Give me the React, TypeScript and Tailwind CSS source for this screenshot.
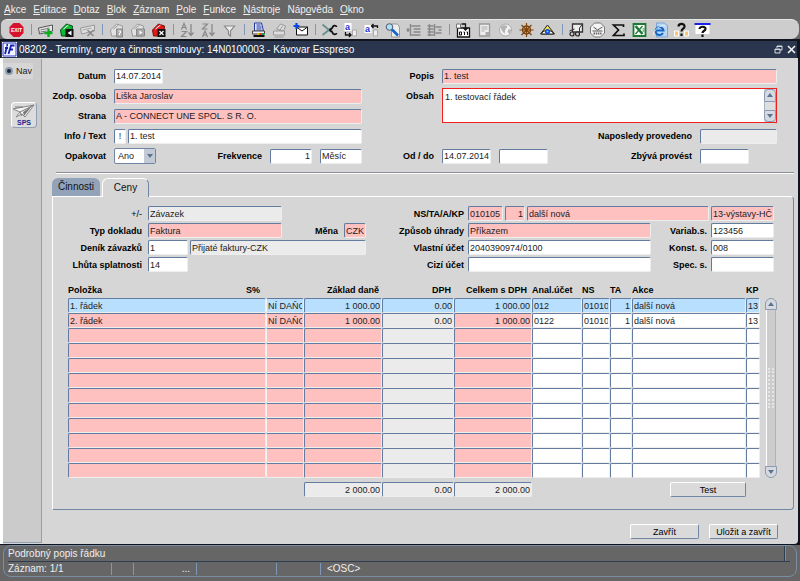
import type { ReactNode } from "react";
import clsx from "clsx";

type Tone = "white" | "pink" | "gray" | "blue";

const tones: Record<Tone, string> = {
  white: "bg-white",
  pink: "bg-[#ffc0c0]",
  gray: "bg-[#ebebeb]",
  blue: "bg-[#b9dfff]",
};

const menu = [
  ["", "A", "kce"],
  ["", "E", "ditace"],
  ["", "D", "otaz"],
  ["", "B", "lok"],
  ["", "Z", "áznam"],
  ["", "P", "ole"],
  ["", "F", "unkce"],
  ["", "N", "ástroje"],
  ["Náp", "o", "věda"],
  ["", "O", "kno"],
];

const card = "M1 6 15 3v6L2 12Z";
const folder = "M2 8 8 2l6 2-1 10H3Z";

const icons: Record<string, ReactNode> = {
  exit: (
    <>
      <path d="M5 1h6l4 4v6l-4 4H5l-4-4V5Z" fill="#d8112c" />
      <text x="8" y="10" fontSize="5" fontWeight="bold" textAnchor="middle" fill="#fff">EXIT</text>
    </>
  ),
  insert: (
    <>
      <path d={card} fill="#e6e6e6" stroke="#555" />
      <path d="M3 8l9-2M3 10l6-1" stroke="#777" />
      <path d="M11 7v8M7 11h8" stroke="#08b020" strokeWidth="2.4" />
    </>
  ),
  query: (
    <>
      <path d={folder} fill="#0bbb30" stroke="#064d14" />
      <path d="M5 7l5-4" stroke="#fff" />
      <path d="M7 7h8v8H7Z" fill="#111" />
      <path d="M13 8.500v5L9 11Z" fill="#fff" />
    </>
  ),
  remove: (
    <>
      <path d={card} fill="#ddd" stroke="#999" />
      <path d="M3 8l9-2" stroke="#aaa" />
      <path d="m8 8 6 6m0-6-6 6" stroke="#888" strokeWidth="1.500" />
    </>
  ),
  enter: (
    <>
      <path d={folder} fill="#e2e2e2" stroke="#999" />
      <path d="m5 7 5-4" stroke="#999" />
      <path d="M8 7h6v8H8Z" fill="#aaa" stroke="#888" />
      <path d="M10 9h2v2h-1v2" fill="none" stroke="#fff" />
    </>
  ),
  execute: (
    <>
      <path d={folder} fill="#e2e2e2" stroke="#999" />
      <path d="m5 7 5-4" stroke="#999" />
      <path d="M7 7h8v7H7Z" fill="#aaa" stroke="#888" />
      <path d="m10 8.500 3 2-3 2Z" fill="#fff" />
    </>
  ),
  cancel: (
    <>
      <path d={folder} fill="#e01a1a" stroke="#7c0d0d" />
      <path d="M5 7l5-4" stroke="#fff" />
      <path d="M7 7h8v8H7Z" fill="#111" />
      <path d="m9 9 4 4m0-4-4 4" stroke="#fff" strokeWidth="1.200" />
    </>
  ),
  asc: (
    <>
      <path d="M2 7.500 4.500 1.500 7 7.500M3 5.500h3M2 9.500h5l-5 5h5" fill="none" stroke="#888" strokeWidth="1.200" />
      <path d="M11.500 2v11M9 10.500l2.500 3 2.500-3" fill="none" stroke="#888" strokeWidth="1.300" />
    </>
  ),
  desc: (
    <>
      <path d="M2 2h5L2 7h5M2 15 4.500 9 7 15M3 13h3" fill="none" stroke="#888" strokeWidth="1.200" />
      <path d="M11.500 2v11M9 10.500l2.500 3 2.500-3" fill="none" stroke="#888" strokeWidth="1.300" />
    </>
  ),
  filter: <path d="M3 4h10l-4 5v5l-2-1.500V9Z" fill="#eee" stroke="#888" strokeWidth="1.200" />,
  print: (
    <>
      <path d="M4 1h7l2 8H4Z" fill="#dfe4ff" stroke="#223a9b" />
      <path d="M6 3h4M6 5h5M6 7h5" stroke="#223a9b" />
      <path d="M2 9h12v3H2Z" fill="#eee" stroke="#444" />
      <path d="M3 14h11" stroke="#111" strokeWidth="2" />
      <path d="M7 12h2" stroke="#e8c400" strokeWidth="2" />
      <path d="M9 12h2" stroke="#e02828" strokeWidth="2" />
      <path d="M11 12h3" stroke="#15a83a" strokeWidth="2" />
    </>
  ),
  printSetup: (
    <>
      <path d="m5 7 4-5 5 2-2 5ZM2 9h11v4H2Z" fill="#ddd" stroke="#999" />
      <path d="m8 9 3-5M3 15h9" stroke="#999" />
    </>
  ),
  mail: (
    <>
      <path d="M4 5h11v8H4Z" fill="#fff" stroke="#111" />
      <path d="m4 5 5.500 4L15 5" fill="none" stroke="#111" />
      <path d="M4 1v6M1 4h6" stroke="#0a46e6" strokeWidth="2.200" />
    </>
  ),
  cut: (
    <>
      <path d="M1 2.500 10 10M1 13l9-7" stroke="#668f8f" strokeWidth="1.800" />
      <path d="m8 8 3-2m-3 2 3 2" stroke="#111" strokeWidth="2" />
      <path d="M11 6c0-3 4-3 4-1m-4 5c0 3 4 3 4 1" fill="none" stroke="#111" strokeWidth="1.600" />
    </>
  ),
  copy: (
    <>
      <path d="M2 1h7v8H2Z" fill="#fff" />
      <text x="2.500" y="8" fontSize="9" fontWeight="bold" fill="#2232dd">a</text>
      <path d="M3 10v3h5M6.500 11l2 2-2 2" fill="none" stroke="#111" strokeWidth="1.300" />
      <path d="M10 8h4v6h-4Z" fill="#eee" stroke="#aaa" />
    </>
  ),
  paste: (
    <>
      <path d="M1 3h7v8H1Z" fill="#fff" />
      <text x="1.500" y="10" fontSize="9" fontWeight="bold" fill="#2232dd">a</text>
      <path d="M14 6V4H8M10 2 8 4l2 2" fill="none" stroke="#111" strokeWidth="1.300" />
      <path d="M10 8h4v6h-4Z" fill="#eee" stroke="#aaa" />
    </>
  ),
  find: (
    <>
      <path d="M7 2h6l2 3v10H7Z" fill="#eee" stroke="#999" />
      <circle cx="5" cy="5" r="3.300" fill="#a9e2f2" stroke="#557" />
      <path d="m7.500 7.500 6 6" stroke="#1466c8" strokeWidth="2.600" />
    </>
  ),
  rows: <path d="M5 2v12M6 4h9M8 7h7M8 10h7M6 13h9M1 8h3M2.500 6v4" fill="none" stroke="#888" strokeWidth="1.400" />,
  tree: <path d="M3 2v12M8 2v12M1 4h6M1 7h6M1 10h6M1 13h6M9 5h6M9 11h6M12 8h3" fill="none" stroke="#888" strokeWidth="1.400" />,
  calendar: (
    <>
      <path d="M2 6h12v9H2Z" fill="#fff" stroke="#111" strokeWidth="1.300" />
      <path d="M1 2h4v4H1Z" fill="#fff" stroke="#777" />
      <path d="M6 2h4v6M8 6l2 2 2-2" fill="none" stroke="#111" strokeWidth="1.300" />
      <path d="M4 10h2v3H4ZM8 10h1v3M11 10h1v3" fill="none" stroke="#111" />
    </>
  ),
  note: (
    <>
      <path d="M3 2h10v12H3Z" fill="#eee" stroke="#999" strokeWidth="1.300" />
      <path d="M5 5h6M5 7h6M5 9h3" stroke="#aaa" />
      <path d="M9 10h4v4H9Z" fill="#aaa" />
    </>
  ),
  globe: (
    <>
      <circle cx="8" cy="8" r="6" fill="#f4f4f4" stroke="#aaa" />
      <path d="M3 4c3 0 5-2 7 1l-2 2-1 5-3-4ZM11 7l3 1-2 4-2-2Z" fill="#b4b4b4" />
    </>
  ),
  wheel: (
    <>
      <circle cx="8" cy="8" r="4" fill="#e0b06a" stroke="#7c4510" strokeWidth="1.500" />
      <path d="M8 1v14M1 8h14M3 3l10 10M13 3 3 13" stroke="#7c4510" strokeWidth="1.200" />
      <circle cx="8" cy="8" r="1.500" fill="#7c4510" />
    </>
  ),
  eye: (
    <>
      <path d="M8 3 1 12h14Z" fill="#f3e34a" stroke="#222" />
      <path d="M2 12c2-5 10-5 12 0Z" fill="#fff" stroke="#222" />
      <circle cx="8" cy="9.500" r="2.600" fill="#1646e0" />
      <circle cx="8" cy="9.500" r="1" fill="#64d8f0" />
    </>
  ),
  cart: (
    <>
      <path d="M4 2h10v8H4Z" fill="#eee" stroke="#333" strokeWidth="1.300" />
      <path d="m14 2-3 4v4M1 9l5-2" stroke="#333" fill="none" />
      <circle cx="3.500" cy="12" r="2" fill="#ccc" stroke="#222" strokeWidth="1.200" />
      <circle cx="9" cy="12" r="2" fill="#ccc" stroke="#222" strokeWidth="1.200" />
    </>
  ),
  clock: (
    <>
      <path d="M5 1h6l4 4v6l-4 4H5l-4-4V5Z" fill="#f4f4f4" stroke="#777" />
      <path d="m4 5 4 3 5-3M3 9h10" stroke="#555" fill="none" />
      <path d="M4 11.500h8" stroke="#666" strokeWidth="2" strokeDasharray="1.500 .7" />
    </>
  ),
  sum: <path d="M13 5V3H3l5 5-5 5.500h10.500v-2" fill="none" stroke="#111" strokeWidth="1.700" />,
  excel: (
    <>
      <path d="M2 2h12v12H2Z" fill="#fff" stroke="#1d7a35" strokeWidth="1.800" />
      <path d="m4 4 7 8" stroke="#1d7a35" strokeWidth="2.600" />
      <path d="m11 4-7 8" stroke="#1d7a35" strokeWidth="1.400" />
      <path d="M11 7h2M11 9h2" stroke="#1d7a35" />
    </>
  ),
  web: (
    <>
      <path d="M4 1h8l3 3v11H4Z" fill="#b9d6f4" stroke="#7ba4d3" />
      <path d="M10.500 11A4 4 0 1 1 11 8.500H4" fill="none" stroke="#1667c4" strokeWidth="2" />
      <path d="M1 13C0 9 8 2 13 4" fill="none" stroke="#e6f3ff" />
    </>
  ),
  whatsThis: (
    <>
      <path d="M1 9h4v5H1ZM11 9h4v5h-4Z" fill="#ffc469" stroke="#fff" />
      <path d="M5 4.500C5 1 11.500 1 11 4.500 11 7 8 6.500 8 9.500M8 11.500V14" fill="none" stroke="#111" strokeWidth="2.200" />
    </>
  ),
  help: (
    <>
      <path d="M1 3h14v9H1Z" fill="#fff" />
      <path d="M0 2h16" stroke="#1a22e8" strokeWidth="2" />
      <path d="M5 7C5 4 11.500 4 11 7c0 2-3 1.500-3 4M8 12.500V15" fill="none" stroke="#111" strokeWidth="2.200" />
    </>
  ),
};

const groups: [string, string][][] = [
  [["exit", "Konec"]],
  [["insert", "Vložit"], ["query", "Dotaz"], ["remove", "Odstranit"]],
  [["enter", "Zadat dotaz"], ["execute", "Provést dotaz"], ["cancel", "Zrušit dotaz"]],
  [["asc", "Vzestupně"], ["desc", "Sestupně"], ["filter", "Filtr"]],
  [["print", "Tisk"], ["printSetup", "Nastavení tisku"], ["mail", "Pošta"]],
  [["cut", "Vyjmout"], ["copy", "Kopírovat"], ["paste", "Vložit text"], ["find", "Najít"], ["rows", "Řádky"], ["tree", "Strom"]],
  [["calendar", "Kalendář"], ["note", "Poznámka"], ["globe", "Svět"], ["wheel", "Navigace"], ["eye", "Náhled"]],
  [["cart", "Doklady"], ["clock", "Čas"], ["sum", "Součet"], ["excel", "Excel"], ["web", "Web"], ["whatsThis", "Co je to"], ["help", "Pomoc"]],
];

const fieldBase =
  "block h-[15px] min-w-0 rounded-[2px] border border-t-[#647ba0] border-l-[#647ba0] border-r-[#eeeeee] border-b-[#eeeeee] px-px text-[9px] leading-3 text-[#222] outline-none";

type FieldProps = {
  id: string;
  value?: string;
  tone?: Tone;
  className?: string;
  label?: string;
};

function Field({ id, value = "", tone = "white", className, label }: FieldProps) {
  return (
    <input id={id} defaultValue={value} aria-label={label} className={clsx(fieldBase, tones[tone], className)} />
  );
}

type LabelProps = { htmlFor: string; className?: string; children: ReactNode };

function Label({ htmlFor, className = "font-bold", children }: LabelProps) {
  return (
    <label htmlFor={htmlFor} className={clsx("shrink-0 text-right text-[9px] leading-3 whitespace-nowrap text-black", className)}>
      {children}
    </label>
  );
}

function Button({ className, children }: { className?: string; children: ReactNode }) {
  return (
    <button
      type="button"
      className={clsx(
        "h-[15px] rounded-[2px] border border-t-white border-l-white border-r-[#7186a6] border-b-[#7186a6] bg-[#dadada] text-[9px] leading-3 text-black",
        className,
      )}
    >
      {children}
    </button>
  );
}

function Arrow({ up = false }: { up?: boolean }) {
  return (
    <svg viewBox="0 0 6 4" className="h-1 w-[6px]">
      <path d={up ? "M0 4 3 0l3 4Z" : "M0 0h6L3 4Z"} fill="#5c7292" />
    </svg>
  );
}

function Toolbar() {
  return (
    <div className="mr-px ml-px flex h-5 items-center gap-1 overflow-hidden rounded-l-md rounded-r-lg border-t border-[#e6e6e6] bg-[#cdcdcd] pl-[7px]">
      {groups.map((group, index) => (
        <div key={index} className="flex items-center gap-1">
          {index > 0 && (
            <span className="flex w-1 justify-center">
              <span className="h-[11px] w-px bg-[#7f97b8]" />
            </span>
          )}
          {group.map(([name, title]) => (
            <button key={name} type="button" aria-label={title} className="h-4 w-[17px]">
              <svg viewBox="0 0 16 16" fill="none" className="h-4 w-[17px]">
                {icons[name]}
              </svg>
            </button>
          ))}
        </div>
      ))}
    </div>
  );
}

function TitleBar() {
  return (
    <header className="mr-[3px] ml-px flex h-[17px] items-center bg-[#29364d] pr-px pl-px text-white">
      <svg viewBox="0 0 15 15" className="h-[15px] w-[15px]">
        <path d="M0 0h15v15H0Z" fill="#fff" />
        <path d="M1 1h13v13H1Z" fill="#f4f6ff" stroke="#2a36c8" />
        <path d="M5 4.500 3 12M4.500 3h1.500M3 6h3M12.500 3.500H9L6.500 12M7.500 7.500H11" stroke="#1420b4" strokeWidth="1.800" fill="none" />
      </svg>
      <h1 className="ml-[2px] grow truncate text-[10px] leading-4">
        08202 - Termíny, ceny a činnosti smlouvy: 14N0100003 - Kávovar Esspreso
      </h1>
      <button type="button" aria-label="Obnovit" className="mr-1">
        <svg viewBox="0 0 9 9" className="h-[9px] w-[9px]">
          <path d="M3 3V1h5v4H6M1 4h5v4H1ZM3 1.500h5M1 4.500h5" fill="none" stroke="#d5d9e0" />
        </svg>
      </button>
      <button type="button" aria-label="Zavřít okno">
        <svg viewBox="0 0 9 9" className="h-[9px] w-[9px]">
          <path d="m1 1 7 7M8 1 1 8" stroke="#f2f2f2" strokeWidth="1.600" />
        </svg>
      </button>
    </header>
  );
}

function Sidebar() {
  return (
    <aside className="mt-px mb-px w-[39px] shrink-0 border-r border-b border-r-[#8f9fb5] border-b-[#8f9fb5] bg-[#cccbcb]">
      <label className="mt-1 mr-2 flex h-4 items-center gap-[3px] bg-[#d6d6d6] pl-[2px] text-[9px] leading-3 text-[#222]">
        <input
          type="radio"
          name="nav"
          defaultChecked
          className="h-2 w-2 appearance-none rounded-full border-2 border-[#8d9bb0] bg-[#1c2836]"
        />
        Nav
      </label>
      <button
        type="button"
        aria-label="SPS"
        className="mt-[23px] ml-2 flex h-[26px] w-[26px] items-center justify-center rounded-sm border border-t-white border-l-white border-r-[#8f9fb5] border-b-[#8f9fb5] bg-[#dcdcdc]"
      >
        <svg viewBox="0 0 24 24" className="h-6 w-6">
          <path d="M1 6 22 2l-9 12-3-3-6 3 4-5Z" fill="#f7f7f7" stroke="#888" />
          <path d="m20 3-8 10-1-4Z" fill="#777" />
          <path d="M22 2 8 9l2 4M3 4h8" fill="none" stroke="#777" />
          <text x="12" y="22" fontSize="7" fontWeight="bold" textAnchor="middle" fill="#23238e">SPS</text>
        </svg>
      </button>
    </aside>
  );
}

function ContractForm() {
  return (
    <div className="flex pr-[17px]">
      <div className="w-[320px] shrink-0">
        <div className="flex h-5 items-center gap-2">
          <Label htmlFor="datum" className="w-16 font-bold">Datum</Label>
          <Field id="datum" value="14.07.2014" className="w-[49px]" />
        </div>
        <div className="flex h-5 items-center gap-2">
          <Label htmlFor="osoba" className="w-16 font-bold">Zodp. osoba</Label>
          <Field id="osoba" value="Liška Jaroslav" tone="pink" className="grow" />
        </div>
        <div className="flex h-5 items-center gap-2">
          <Label htmlFor="strana" className="w-16 font-bold">Strana</Label>
          <Field id="strana" value="A - CONNECT UNE SPOL. S R. O." tone="pink" className="grow" />
        </div>
        <div className="flex h-5 items-center gap-2">
          <Label htmlFor="info" className="w-16 font-bold">Info / Text</Label>
          <div className="flex grow gap-[2px]">
            <Field id="info" value="!" className="w-3 text-center text-[#4a6fa5]" />
            <Field id="info-text" label="Text" value="1. test" className="grow" />
          </div>
        </div>
        <div className="flex h-5 items-center gap-2">
          <Label htmlFor="opakovat" className="w-16 font-bold">Opakovat</Label>
          <div className="relative w-[42px]">
            <select
              id="opakovat"
              className="block h-4 w-full appearance-none rounded-[2px] border border-[#7186a6] bg-white pl-[3px] text-[9px] leading-3 text-[#222]"
            >
              <option>Ano</option>
              <option>Ne</option>
            </select>
            <span className="pointer-events-none absolute inset-y-px right-px flex w-[11px] items-center justify-center bg-[#c3cad4]">
              <Arrow />
            </span>
          </div>
          <Label htmlFor="frekvence" className="grow font-bold">Frekvence</Label>
          <Field id="frekvence" value="1" className="w-[42px] text-right" />
          <Field id="jednotka" label="Jednotka" value="Měsíc" className="w-[42px]" />
        </div>
      </div>
      <div className="min-w-0 grow">
        <div className="flex h-5 items-center gap-2">
          <Label htmlFor="popis" className="w-[72px] font-bold">Popis</Label>
          <Field id="popis" value="1. test" tone="pink" className="grow" />
        </div>
        <div className="flex h-10 gap-2 pt-[2px]">
          <Label htmlFor="obsah" className="w-[72px] pt-[2px] font-bold">Obsah</Label>
          <div className="flex h-[35px] grow border border-[#f02020] bg-white">
            <textarea
              id="obsah"
              defaultValue="1. testovací řádek"
              className="block grow resize-none overflow-hidden px-[2px] py-[2px] text-[9px] leading-3 text-[#222] outline-none"
            />
            <div className="flex w-3 flex-col bg-[#cfd6df]">
              <button type="button" aria-label="Nahoru" className="flex flex-1 items-center justify-center rounded-t-sm border border-[#8a9bb3] bg-[#d6dae0]">
                <Arrow up />
              </button>
              <span className="h-2 border-x border-[#a8b4c4] bg-[#dedede]" />
              <button type="button" aria-label="Dolů" className="flex flex-1 items-center justify-center rounded-b-sm border border-[#8a9bb3] bg-[#d6dae0]">
                <Arrow />
              </button>
            </div>
          </div>
        </div>
        <div className="flex h-5 items-center gap-2">
          <Label htmlFor="naposledy" className="grow font-bold">Naposledy provedeno</Label>
          <Field id="naposledy" tone="gray" className="w-[77px]" />
        </div>
        <div className="flex h-5 items-center gap-2">
          <Label htmlFor="od" className="w-[72px] font-bold">Od / do</Label>
          <Field id="od" value="14.07.2014" className="w-[49px]" />
          <Field id="do" label="Do" className="w-[49px]" />
          <Label htmlFor="zbyva" className="grow font-bold">Zbývá provést</Label>
          <div className="w-[77px]">
            <Field id="zbyva" className="w-[49px]" />
          </div>
        </div>
      </div>
    </div>
  );
}

function PriceForm() {
  return (
    <div className="flex pr-1">
      <div className="w-[298px] shrink-0">
        <div className="flex h-[17px] items-center gap-[6px]">
          <Label htmlFor="znak" className="w-[74px]">+/-</Label>
          <Field id="znak" value="Závazek" tone="gray" className="w-[134px]" />
        </div>
        <div className="flex h-[17px] items-center gap-[6px]">
          <Label htmlFor="typ" className="w-[74px] font-bold">Typ dokladu</Label>
          <Field id="typ" value="Faktura" tone="pink" className="w-[134px]" />
          <Label htmlFor="mena" className="grow font-bold">Měna</Label>
          <Field id="mena" value="CZK" tone="pink" className="w-[22px]" />
        </div>
        <div className="flex h-[17px] items-center gap-[6px]">
          <Label htmlFor="denik" className="w-[74px] font-bold">Deník závazků</Label>
          <div className="flex grow gap-[2px]">
            <Field id="denik" value="1" className="w-10" />
            <Field id="denik-nazev" label="Název deníku" value="Přijaté faktury-CZK" tone="gray" className="grow" />
          </div>
        </div>
        <div className="flex h-[17px] items-center gap-[6px]">
          <Label htmlFor="lhuta" className="w-[74px] font-bold">Lhůta splatnosti</Label>
          <Field id="lhuta" value="14" className="w-10" />
        </div>
      </div>
      <div className="min-w-0 grow">
        <div className="flex h-[17px] items-center gap-1">
          <Label htmlFor="ns" className="w-[98px] font-bold">NS/TA/A/KP</Label>
          <div className="flex grow gap-[2px]">
            <Field id="ns" value="010105" tone="pink" className="w-[35px]" />
            <Field id="ta" label="TA" value="1" tone="pink" className="w-5 text-right" />
            <Field id="akce" label="Akce" value="další nová" tone="pink" className="grow" />
            <Field id="kp" label="KP" value="13-výstavy-HČ" tone="pink" className="w-[63px]" />
          </div>
        </div>
        <div className="flex h-[17px] items-center gap-1">
          <Label htmlFor="uhrada" className="w-[98px] font-bold">Způsob úhrady</Label>
          <Field id="uhrada" value="Příkazem" tone="pink" className="grow" />
          <Label htmlFor="variab" className="w-[52px] font-bold">Variab.s.</Label>
          <Field id="variab" value="123456" className="w-[63px]" />
        </div>
        <div className="flex h-[17px] items-center gap-1">
          <Label htmlFor="vlastni" className="w-[98px] font-bold">Vlastní účet</Label>
          <Field id="vlastni" value="2040390974/0100" className="grow" />
          <Label htmlFor="konst" className="w-[52px] font-bold">Konst. s.</Label>
          <Field id="konst" value="008" className="w-[63px]" />
        </div>
        <div className="flex h-[17px] items-center gap-1">
          <Label htmlFor="cizi" className="w-[98px] font-bold">Cizí účet</Label>
          <Field id="cizi" className="grow" />
          <Label htmlFor="spec" className="w-[52px] font-bold">Spec. s.</Label>
          <Field id="spec" className="w-[63px]" />
        </div>
      </div>
    </div>
  );
}

const columns: { title: string; width: string; head: string; cell: string; tone: Tone }[] = [
  { title: "Položka", width: "", head: "text-left", cell: "", tone: "pink" },
  { title: "S%", width: "w-[38px]", head: "", cell: "border-l-[#f6f6f6] px-0", tone: "pink" },
  { title: "Základ daně", width: "w-[78px]", head: "pr-[3px] text-right", cell: "text-right", tone: "pink" },
  { title: "DPH", width: "w-[72px]", head: "pr-[3px] text-right", cell: "text-right", tone: "gray" },
  { title: "Celkem s DPH", width: "w-[78px]", head: "pr-[5px] text-right", cell: "text-right", tone: "pink" },
  { title: "Anal.účet", width: "w-[50px]", head: "text-left", cell: "", tone: "white" },
  { title: "NS", width: "w-[28px]", head: "text-left", cell: "", tone: "white" },
  { title: "TA", width: "w-[22px]", head: "text-left", cell: "text-right", tone: "white" },
  { title: "Akce", width: "w-[114px]", head: "text-left", cell: "", tone: "white" },
  { title: "KP", width: "w-[14px]", head: "text-left", cell: "", tone: "white" },
];

const items = [
  ["1. řádek", "NÍ DAŇOV", "1 000.00", "0.00", "1 000.00", "012", "010105", "1", "další nová", "13-"],
  ["2. řádek", "NÍ DAŇOV", "1 000.00", "0.00", "1 000.00", "0122", "010105", "1", "další nová", "13-"],
  ...Array.from({ length: 10 }, () => [] as string[]),
];

const totals = ["2 000.00", "0.00", "2 000.00"];

function ItemsTable() {
  return (
    <div className="mt-2 flex gap-1">
      <table className="min-w-0 grow table-fixed border-collapse">
        <colgroup>
          {columns.map((column) => (
            <col key={column.title} className={column.width} />
          ))}
        </colgroup>
        <thead>
          <tr className="h-[17px] text-[9px] leading-3 text-black">
            {columns.map((column) => (
              <th key={column.title} className={clsx("py-0 pl-0 font-bold whitespace-nowrap", column.head)}>
                {column.title === "S%" ? <span className="-ml-16">S%</span> : column.title}
              </th>
            ))}
          </tr>
        </thead>
        <tbody>
          {items.map((row, rowIndex) => (
            <tr key={rowIndex}>
              {columns.map((column, index) => (
                <td key={column.title} className="p-0">
                  <Field
                    id={`r${rowIndex}c${index}`}
                    label={`${column.title} ${rowIndex + 1}`}
                    value={row[index]}
                    tone={rowIndex === 0 ? "blue" : column.tone}
                    className={clsx("w-full", column.cell)}
                  />
                </td>
              ))}
            </tr>
          ))}
        </tbody>
        <tfoot>
          <tr>
            <td colSpan={2} />
            {totals.map((total, index) => (
              <td key={index} className="p-0 pt-1">
                <Field id={`total${index}`} label="Součet" value={total} tone="gray" className="w-full text-right" />
              </td>
            ))}
            <td colSpan={4} className="p-0 pt-1 text-right">
              <Button className="ml-auto block w-[76px]">Test</Button>
            </td>
            <td />
          </tr>
        </tfoot>
      </table>
      <div className="mt-[17px] mb-[19px] flex w-[14px] shrink-0 flex-col items-center">
        <button type="button" aria-label="Posunout nahoru" className="flex h-3 w-3 items-center justify-center rounded-t-full border border-[#8a9bb3] bg-[#d6dae0]">
          <Arrow up />
        </button>
        <div className="flex w-[10px] grow items-center justify-center border-r border-l border-r-[#a8b4c4] border-l-white bg-[#cccccc]">
          <span className="h-10 w-[6px] border-x-2 border-dotted border-[#e6e6e6]" />
        </div>
        <button type="button" aria-label="Posunout dolů" className="flex h-3 w-3 items-center justify-center rounded-b-full border border-[#8a9bb3] bg-[#d6dae0]">
          <Arrow />
        </button>
      </div>
    </div>
  );
}

function StatusBar() {
  return (
    <footer className="mx-[3px] mb-1 rounded-lg border border-[#7b8ca5] pr-[6px] pl-1 text-[10px] leading-3 text-[#eeeeee]">
      <div className="flex h-4 items-center border-b border-[#2f3d54]">
        <span className="grow">Podrobný popis řádku</span>
        <span className="mr-1 h-full w-[2px] border-l border-[#2f3d54] bg-[#7b8ca5]" />
      </div>
      <div className="flex h-[14px] items-center">
        <span className="w-[103px]">Záznam: 1/1</span>
        <span className="h-3 w-[22px] border-l border-[#7f97b8]" />
        <span className="h-3 w-[63px] border-l border-[#7f97b8] pr-[6px] text-right">...</span>
        <span className="h-3 w-20 border-l border-[#7f97b8]" />
        <span className="h-3 w-11 border-l border-[#7f97b8]" />
        <span className="h-3 border-l border-[#7f97b8] pl-[6px]">&lt;OSC&gt;</span>
      </div>
    </footer>
  );
}

export default function App() {
  return (
    <div className="flex min-h-screen flex-col bg-[#666666] font-['Liberation_Sans',Arial,sans-serif]">
      <nav className="flex h-[19px] items-center gap-[7px] pl-1 text-[10px] leading-3 text-[#f0f0f0]">
        {menu.map(([before, key, after]) => (
          <a key={key + after} href="#">
            {before}
            <span className="underline">{key}</span>
            {after}
          </a>
        ))}
      </nav>
      <Toolbar />
      <div className="flex grow flex-col bg-[#10151d] pt-[2px] pb-px">
        <TitleBar />
        <main className="mr-[2px] flex grow rounded-br-sm border-l-3 border-white bg-[#d6d6d6]">
          <Sidebar />
          <div className="flex min-w-0 grow flex-col pt-2 pr-1">
            <ContractForm />
            <div className="mt-[6px] ml-[14px] h-[2px] border-t border-[#8a8f99] bg-white" />
            <div className="mt-1 ml-[10px] flex items-end gap-[2px] text-[10px] leading-3">
              <button type="button" className="h-[18px] w-12 rounded-t-md bg-[#91a2b9] text-[#111]">
                Činnosti
              </button>
              <button type="button" className="relative -mb-px h-[19px] w-[47px] rounded-t-md border-t border-r border-l border-t-white border-r-[#7186a6] border-l-white bg-[#d6d6d6] text-[#111]">
                Ceny
              </button>
            </div>
            <section className="ml-[10px] rounded-r-[4px] border border-t-white border-r-[#7186a6] border-b-[#7186a6] border-l-white pt-2 pr-[15px] pb-3 pl-[15px]">
              <PriceForm />
              <ItemsTable />
            </section>
            <div className="mt-[14px] mr-4 mb-[5px] flex justify-end gap-[10px]">
              <Button className="w-[69px]">Zavřít</Button>
              <Button className="w-[69px]">Uložit a zavřít</Button>
            </div>
          </div>
        </main>
      </div>
      <StatusBar />
    </div>
  );
}
